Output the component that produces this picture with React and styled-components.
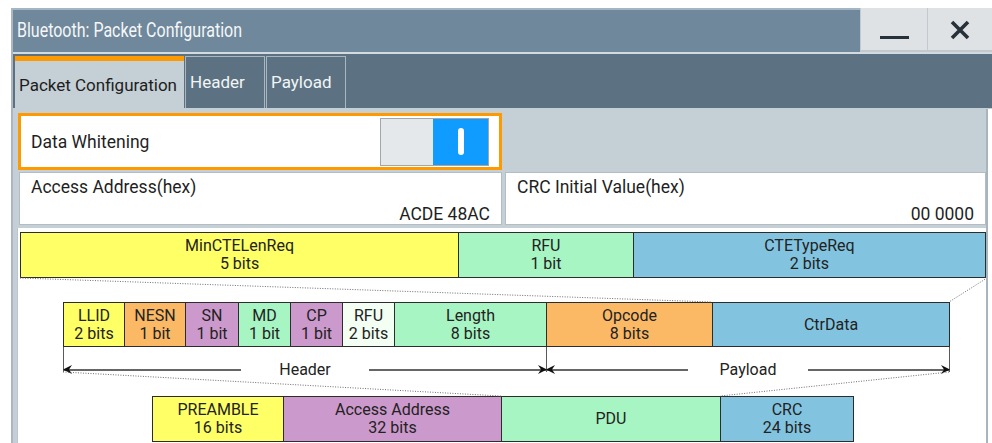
import React from "react";
import styled, { createGlobalStyle } from "styled-components";

const GlobalStyle = createGlobalStyle`
  html, body {
    margin: 0;
    padding: 0;
    background: #ffffff;
    overflow: hidden;
  }
  body {
    font-family: Roboto, "Liberation Sans", sans-serif;
    color: #1f1f1f;
  }
`;

const topRow = [
  { name: "MinCTELenReq", bits: "5 bits", w: 439, bg: "#ffff66" },
  { name: "RFU", bits: "1 bit", w: 175, bg: "#a8f5c4" },
  { name: "CTETypeReq", bits: "2 bits", w: 354, bg: "#82c4e0" },
];

const midRow = [
  { name: "LLID", bits: "2 bits", w: 61, bg: "#ffff66" },
  { name: "NESN", bits: "1 bit", w: 61, bg: "#fbb966" },
  { name: "SN", bits: "1 bit", w: 53, bg: "#cc99cc" },
  { name: "MD", bits: "1 bit", w: 52, bg: "#a8f5c4" },
  { name: "CP", bits: "1 bit", w: 52, bg: "#cc99cc" },
  { name: "RFU", bits: "2 bits", w: 52, bg: "#f2fff2" },
  { name: "Length", bits: "8 bits", w: 152, bg: "#a8f5c4" },
  { name: "Opcode", bits: "8 bits", w: 166, bg: "#fbb966" },
  { name: "CtrData", w: 238, bg: "#82c4e0" },
];

const lowRow = [
  { name: "PREAMBLE", bits: "16 bits", w: 131, bg: "#ffff66" },
  { name: "Access Address", bits: "32 bits", w: 218, bg: "#cc99cc" },
  { name: "PDU", w: 219, bg: "#a8f5c4" },
  { name: "CRC", bits: "24 bits", w: 134, bg: "#82c4e0" },
];

// window frame
const Window = styled.div`
  margin: 8px 0 0 11px;
  width: 981px;
  border-left: 2px solid #aab7c0;
  box-sizing: border-box;
`;

const TitleBar = styled.div`
  display: flex;
  align-items: stretch;
  background: #6f889b;
  border-top: 2px solid #a3b6c4;
  box-sizing: border-box;
  border-bottom: 2px solid #d3dbe0;
  height: 46px;
`;

const Title = styled.div`
  flex: 1;
  display: flex;
  align-items: center;
  padding-left: 4px;
  padding-bottom: 2px;
  color: #f5f7f9;
  font-size: 20px;

  span {
    display: inline-block;
    transform: scaleX(0.8);
    transform-origin: left center;
    white-space: nowrap;
  }
`;

const WinButton = styled.button`
  width: ${(p) => p.w}px;
  border: none;
  border-left: 1px solid #c3c9cd;
  background: #dfe2e5;
  box-shadow: inset 0 -2px 0 #c4c9cd;
  margin-top: -2px;
  display: flex;
  align-items: center;
  justify-content: center;
  padding: 0;
  color: #27313a;
`;

const MinBar = styled.span`
  display: block;
  width: 29px;
  height: 3px;
  background: #27313a;
  margin-top: 15px;
`;

const TabBar = styled.div`
  display: flex;
  height: 55px;
  padding: 2px 0 0 2px;
  box-sizing: border-box;
  background: #5c7282;
  border-bottom: 1px solid #c5cfd6;
`;

const Tab = styled.div`
  display: flex;
  align-items: center;
  padding: 0 4px;
  width: ${(p) => p.w}px;
  box-sizing: border-box;
  white-space: nowrap;
  font-size: 17px;
  color: ${(p) => (p.active ? "#1d1d1d" : "#f2f5f7")};
  background: ${(p) => (p.active ? "#c5cfd6" : "#5c7282")};
  border: ${(p) => (p.active ? "none" : "1px solid #aab7c1")};
  border-top: ${(p) => (p.active ? "5px solid #ff9900" : "1px solid #aab7c1")};
  border-bottom: none;
  margin-right: 1px;
  padding-bottom: ${(p) => (p.active ? "0" : "2px")};
`;

const Content = styled.div`
  background: #c5cfd6;
  padding: 4px 0 0 4px;
  height: 334px;
  overflow: hidden;
  margin-right: 4px;
  border-right: 2px solid #a9b5be;
  box-sizing: border-box;
`;

const Setting = styled.div`
  width: 484px;
  height: 57px;
  margin-left: 1px;
  box-sizing: border-box;
  border: 3px solid #ff9900;
  background: #ffffff;
  display: flex;
  align-items: center;
  justify-content: space-between;
  padding: 0 10px 0 10px;
  font-size: 17.5px;
`;

const Toggle = styled.div`
  width: 109px;
  height: 48px;
  box-sizing: border-box;
  border: 1px solid #a3a6a8;
  display: flex;
  background: #e4e8eb;
`;

const ToggleOn = styled.div`
  margin-left: auto;
  width: 55px;
  background: #0f9bff;
  display: flex;
  align-items: center;
  justify-content: center;
`;

const Knob = styled.span`
  width: 6px;
  height: 27px;
  border-radius: 3px;
  background: #ffffff;
`;

const FieldGrid = styled.div`
  display: grid;
  grid-template-columns: 483px 481px;
  column-gap: 3px;
  margin: 2px 0 0 2px;
`;

const Field = styled.div`
  height: 53px;
  box-sizing: border-box;
  background: #ffffff;
  border: 1px solid #b4bdc3;
  padding: 3px 11px 0 11px;
  font-size: 17.5px;
  display: flex;
  flex-direction: column;
  line-height: 22px;
`;

const FieldValue = styled.div`
  text-align: right;
  margin-top: 5px;
`;

// packet diagram
const Diagram = styled.div`
  position: relative;
  margin-top: 3px;
  background: #ffffff;
  border-left: 1px solid #bcc5cb;
  padding: 4px 0 0 2px;
  height: 211px;
`;

const Row = styled.div`
  display: flex;
  margin-left: ${(p) => p.indent || 0}px;
  margin-top: ${(p) => p.gap || 0}px;
  height: ${(p) => p.h}px;
`;

const Cell = styled.div`
  width: ${(p) => p.w}px;
  box-sizing: border-box;
  background: ${(p) => p.bg};
  border: 1px solid #2c2c2c;
  border-right: none;
  &:last-child {
    border-right: 1px solid #2c2c2c;
  }
  display: flex;
  flex-direction: column;
  align-items: center;
  justify-content: center;
  font-size: 16px;
  line-height: 18px;
  color: #222;
  text-align: center;
`;

const Brackets = styled.div`
  display: flex;
  margin-left: 43px;
  height: 25px;
`;

const Bracket = styled.div`
  width: ${(p) => p.w}px;
  box-sizing: border-box;
  border-left: 1px solid #5a5a5a;
  border-right: ${(p) => (p.last ? "1px solid #5a5a5a" : "none")};
  display: flex;
  align-items: flex-end;
`;

const Track = styled.div`
  display: flex;
  align-items: center;
  width: 100%;
  height: 18px;
  margin-bottom: -7px;
`;

const Seg = styled.div`
  position: relative;
  flex: 1;
  height: 1.5px;
  background: #666;
`;

const Head = styled.svg`
  position: absolute;
  top: -4px;
  ${(p) => (p.dir === "left" ? "left: -1px;" : "right: -1px;")}
`;

const BracketLabel = styled.span`
  padding: 0 ${(p) => p.pad}px;
  font-size: 16px;
  line-height: 18px;
  color: #222;
`;

const Connectors = styled.svg`
  position: absolute;
  left: 0;
  top: 0;
  overflow: visible;
  pointer-events: none;
`;

function Arrow({ dir }) {
  return (
    <Head dir={dir} width="9" height="9" viewBox="0 0 9 9">
      {dir === "left" ? (
        <path d="M9 0 L0 4.5 L9 9 L6 4.5 Z" fill="#111" />
      ) : (
        <path d="M0 0 L9 4.5 L0 9 L3 4.5 Z" fill="#111" />
      )}
    </Head>
  );
}

function BracketSpan({ label, w, pad, last }) {
  return (
    <Bracket w={w} last={last}>
      <Track>
        <Seg>
          <Arrow dir="left" />
        </Seg>
        <BracketLabel pad={pad}>{label}</BracketLabel>
        <Seg>
          <Arrow dir="right" />
        </Seg>
      </Track>
    </Bracket>
  );
}

function PacketRow({ items, ...rest }) {
  return (
    <Row {...rest}>
      {items.map((it, i) => (
        <Cell key={i} w={it.w} bg={it.bg}>
          <span>{it.name}</span>
          {it.bits && <span>{it.bits}</span>}
        </Cell>
      ))}
    </Row>
  );
}

const App = () => {
  return (
    <>
      <GlobalStyle />
      <Window>
        <TitleBar>
          <Title>
            <span>Bluetooth: Packet Configuration</span>
          </Title>
          <WinButton w={67}>
            <MinBar />
          </WinButton>
          <WinButton w={65}>
            <svg width="22" height="22" viewBox="0 0 22 22">
              <path d="M3 3 L19 19 M19 3 L3 19" stroke="#27313a" strokeWidth="3.6" />
            </svg>
          </WinButton>
        </TitleBar>
        <TabBar>
          <Tab active w={169}>Packet Configuration</Tab>
          <Tab w={80}>Header</Tab>
          <Tab w={80}>Payload</Tab>
        </TabBar>
        <Content>
          <Setting>
            <span>Data Whitening</span>
            <Toggle>
              <ToggleOn>
                <Knob />
              </ToggleOn>
            </Toggle>
          </Setting>
          <FieldGrid>
            <Field>
              <span>Access Address(hex)</span>
              <FieldValue>ACDE 48AC</FieldValue>
            </Field>
            <Field>
              <span>CRC Initial Value(hex)</span>
              <FieldValue>00 0000</FieldValue>
            </Field>
          </FieldGrid>
          <Diagram>
            <PacketRow items={topRow} h={46} />
            <PacketRow items={midRow} h={45} indent={43} gap={24} />
            <Brackets>
              <BracketSpan label="Header" w={483} pad={38} />
              <BracketSpan label="Payload" w={404} pad={32} last />
            </Brackets>
            <PacketRow items={lowRow} h={46} indent={132} gap={24} />
            <Connectors width="971" height="211">
              <g stroke="#6d6d6d" strokeWidth="1" strokeDasharray="1 1.5" fill="none">
                <line x1="2" y1="50" x2="694" y2="74" />
                <line x1="969" y1="50" x2="931" y2="74" />
                <line x1="45" y1="144" x2="483" y2="168" />
                <line x1="931" y1="144" x2="702" y2="168" />
              </g>
            </Connectors>
          </Diagram>
        </Content>
      </Window>
    </>
  );
};

export default App;
